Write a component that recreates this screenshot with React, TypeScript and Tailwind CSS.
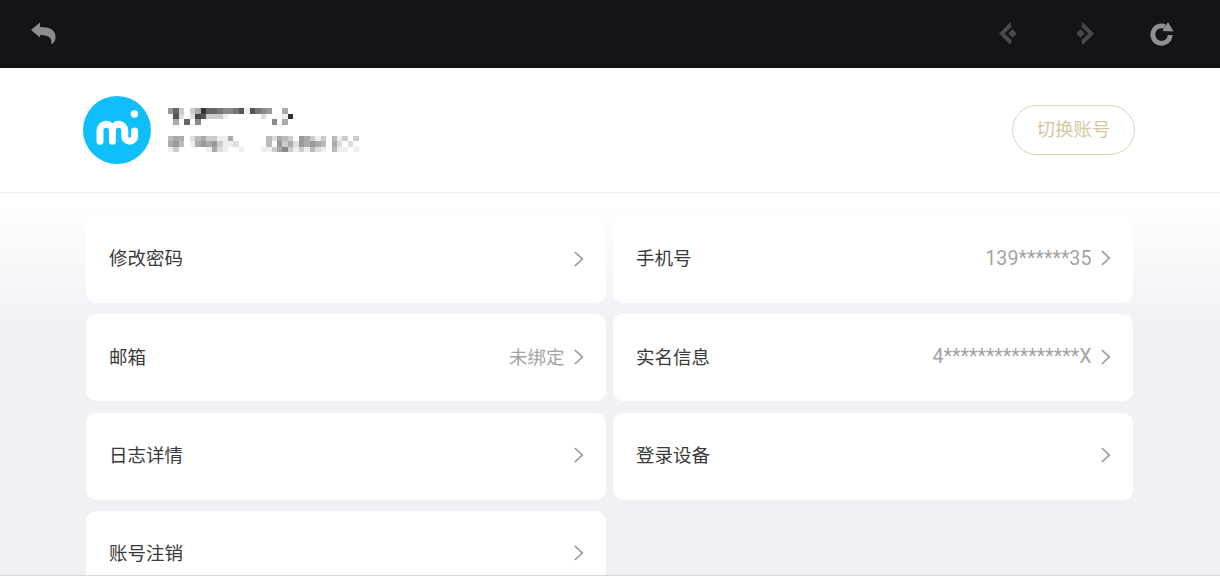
const FONT = "font-['Noto_Sans_CJK_SC','Noto_Sans',sans-serif]";

const MOSAIC: [number, string][] = [
  [0, "96cfca36678875e5789ffaf"],
  [5.5, "f5dfd45ccceffffffdfffe3"],
  [11, "faf6f8fffffffffffff8fa"],
  [27.5, "baafdbacceeaffffffbdabcf9acecfbecfc"],
  [33, "a9bfea9a9ceedfffffbf9cad9a9abfadfdf"],
  [38.7, "ecfffffeadeffefffeeca8cecebdefbeefe"],
];

function Mosaic() {
  return (
    <svg width="192" height="45" viewBox="0 0 192 45" className="blur-[0.4px]" shapeRendering="crispEdges">
      {MOSAIC.flatMap(([y, row], r) =>
        row.split("").map((c, i) =>
          c === "f" ? null : (
            <rect key={`${r}-${i}`} x={i * 5.45} y={y} width="5.45" height="5.7" fill={`#${c}${c}${c}`} />
          ),
        ),
      )}
    </svg>
  );
}

function BackIcon() {
  return (
    <svg width="34" height="34" viewBox="0 0 34 34" className="shrink-0">
      <path d="M5 13 L14 5.5 V10 C24 10 30 13 29.5 21 C29.3 24 27 27 25 27 C26.5 22 24 18 14 18 V20.5 Z" fill="#8b8c8d" />
    </svg>
  );
}

function NavIcon({ flip }: { flip?: boolean }) {
  return (
    <svg width="34" height="34" viewBox="0 0 34 34" className={flip ? "shrink-0 -scale-x-100" : "shrink-0"}>
      <path d="M8 16.5 L19.5 5 L20.5 10 L13.5 16.5 L20.5 23 L19.5 28 Z" fill="#47484b" />
      <path d="M21.5 12.3 L25.7 16.5 L21.5 20.7 L17.3 16.5 Z" fill="#47484b" />
    </svg>
  );
}

function RefreshIcon() {
  return (
    <svg width="34" height="34" viewBox="0 0 34 34" className="shrink-0">
      <path d="M20 9.6 A8.7 8.7 0 1 0 25.2 18" fill="none" stroke="#8f9091" strokeWidth="4.8" />
      <path d="M23 5 L28.5 14.5 L17.5 14 Z" fill="#8f9091" />
    </svg>
  );
}

function MiLogo() {
  return (
    <svg width="68" height="68" viewBox="0 0 68 68" className="shrink-0">
      <circle cx="34" cy="34" r="34" fill="#0fbffc" />
      <path
        d="M17 45.2 V34.5 a6.2 6.2 0 0 1 12.4 0 V45.2 M29.4 34.5 a6.2 6.2 0 0 1 12.4 0 V40.4 a4.9 4.9 0 0 0 9.8 0 V35"
        fill="none"
        stroke="#fff"
        strokeWidth="7"
        strokeLinecap="round"
      />
      <circle cx="51.4" cy="18" r="3.7" fill="#fff" />
    </svg>
  );
}

function Chevron() {
  return (
    <svg width="11" height="16" viewBox="0 0 11 16" className="-translate-y-px shrink-0">
      <path d="M1.8 1 L9.3 8 L1.8 15" fill="none" stroke="#9a9a9a" strokeWidth="1.7" />
    </svg>
  );
}

function Row({ label, value, latin }: { label: string; value?: string; latin?: boolean }) {
  return (
    <div className="flex h-[87px] items-center justify-between rounded-[10px] bg-white pl-[23px] pr-[22px]">
      <span className="-translate-y-[2px] text-[18.5px] leading-none text-[#3a3a3a]">{label}</span>
      <div className="flex items-center gap-[8.5px]">
        {value && (
          <span
            className={
              latin
                ? "-translate-y-px font-['Roboto',sans-serif] text-[19.7px] leading-none text-[#a3a3a3]"
                : "-translate-y-[2px] text-[18.5px] leading-none text-[#a3a3a3]"
            }
          >
            {value}
          </span>
        )}
        <Chevron />
      </div>
    </div>
  );
}

export default function App() {
  return (
    <div className={`flex h-[576px] w-[1220px] flex-col overflow-hidden bg-white ${FONT}`}>
      <header className="flex h-[68px] shrink-0 items-center justify-between bg-[#131417] pl-[26px] pr-[41px]">
        <BackIcon />
        <div className="flex items-center gap-[43px]">
          <NavIcon />
          <NavIcon flip />
          <RefreshIcon />
        </div>
      </header>

      <section className="flex h-[125px] shrink-0 items-center justify-between border-b border-[#f0f0f0] pl-[83px] pr-[85px]">
        <div className="flex items-center gap-[17px]">
          <MiLogo />
          <Mosaic />
        </div>
        <button className="flex h-[50px] w-[123px] items-center justify-center rounded-full border border-[#dcd5b4] pb-[3px] text-[18.5px] leading-none text-[#d3c8a3]">
          切换账号
        </button>
      </section>

      <section className="h-[382px] shrink-0 overflow-hidden bg-[linear-gradient(to_bottom,#ffffff_10px,#eff1f5_135px)] pl-[86px] pt-[23px]">
        <div className="grid w-[1047px] grid-cols-2 gap-x-[7px] gap-y-[11.33px]">
          <Row label="修改密码" />
          <Row label="手机号" value="139******35" latin />
          <Row label="邮箱" value="未绑定" />
          <Row label="实名信息" value="4****************X" latin />
          <Row label="日志详情" />
          <Row label="登录设备" />
          <Row label="账号注销" />
        </div>
      </section>
      <div className="h-px shrink-0 bg-[#d8d8d8]" />
    </div>
  );
}
